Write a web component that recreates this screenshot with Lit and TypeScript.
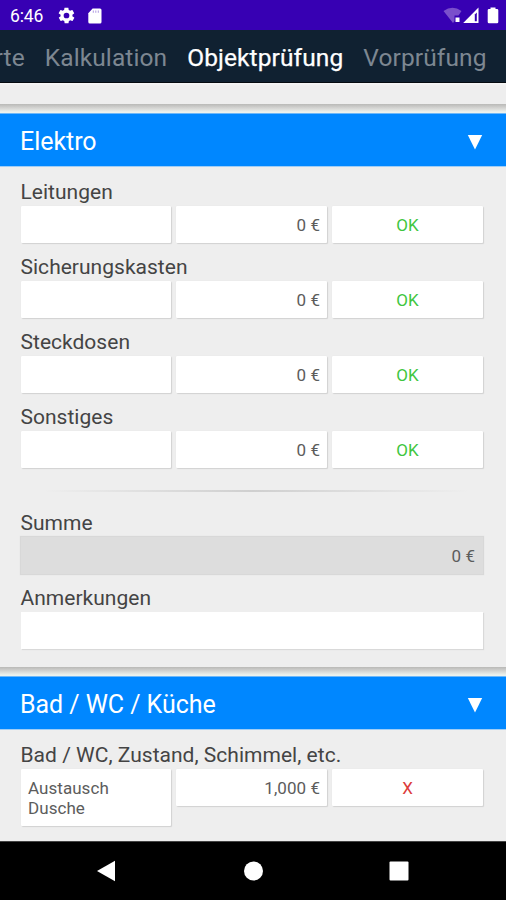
import { LitElement, html, css } from "lit";
import { customElement, property } from "lit/decorators.js";
import { classMap } from "lit/directives/class-map.js";

@customElement("status-bar")
class StatusBar extends LitElement {
  static styles = css`
    :host { display: flex; align-items: center; height: 30px; box-sizing: border-box; padding: 1px 7px 0 10px; background: #3700b3; color: #fff; }
    .time { font-size: 17.5px; line-height: 28px; width: 47px; letter-spacing: -0.1px; padding-top: 1px; }
    svg { display: block; flex: none; }
    .sd { margin-left: 12px; }
    .grow { flex: 1; }
    .battery { margin-left: 8px; }
    .signal { margin-left: 1px; }
  `;
  render() {
    return html`
      <span class="time">6:46</span>
      <svg width="19" height="19" viewBox="0 0 24 24" fill="#fff"><path d="M19.4 13c0-.3.1-.6.1-1s0-.7-.1-1l2.1-1.6c.2-.2.3-.4.1-.7l-2-3.4c-.1-.2-.4-.3-.6-.2l-2.5 1c-.5-.4-1.1-.7-1.7-1l-.4-2.6c0-.2-.2-.4-.5-.4h-4c-.2 0-.5.2-.5.4l-.4 2.6c-.6.3-1.2.6-1.7 1l-2.5-1c-.2-.1-.5 0-.6.2l-2 3.4c-.1.2-.1.5.1.7L4.6 11c0 .3-.1.6-.1 1s0 .7.1 1l-2.1 1.6c-.2.2-.3.4-.1.7l2 3.4c.1.2.4.3.6.2l2.5-1c.5.4 1.1.7 1.7 1l.4 2.6c0 .2.2.4.5.4h4c.2 0 .5-.2.5-.4l.4-2.6c.6-.3 1.2-.6 1.7-1l2.5 1c.2.1.5 0 .6-.2l2-3.4c.1-.2.1-.5-.1-.7zM12 15.6a3.6 3.6 0 1 1 0-7.2 3.6 3.6 0 0 1 0 7.2z"/></svg>
      <svg class="sd" width="14" height="16" viewBox="0 0 14 16"><path fill="#fff" d="M4.6 .5H12Q13.5 .5 13.5 2V14Q13.500 15.500 12 15.500H1.800Q.3 15.500 .3 14V5.200Z"/><path stroke="#3700b3" stroke-opacity=".4" stroke-width="1" d="M5.300 2.500V4.800M7.800 2.500V4.800M10.300 2.500V4.800"/></svg>
      <span class="grow"></span>
      <svg width="19" height="17" viewBox="0 0 19 17"><path fill="#7a4fcb" d="M.5 4Q9.500 -2.500 18.500 4L15.500 8.500H11.500V14L10 16Z"/><rect x="12.500" y="10.500" width="4" height="4.500" fill="#fff"/></svg>
      <svg class="signal" width="16" height="17" viewBox="0 0 16 17"><path fill="#fff" d="M.2 16L15.500 .5V16Z"/><path fill="#3700b3" d="M11.800 7.500L13.800 5.500V14.200H11.800Z"/></svg>
      <svg class="battery" width="12" height="17" viewBox="0 0 12 17"><path fill="#fff" d="M3.500 .5H8.500V2H10Q11.300 2 11.300 3.300V15Q11.300 16.300 10 16.300H2Q.7 16.300 .7 15V3.300Q.7 2 2 2H3.500Z"/></svg>
    `;
  }
}

@customElement("tab-strip")
class TabStrip extends LitElement {
  static styles = css`
    :host { display: flex; justify-content: flex-end; gap: 20px; height: 53px; box-sizing: border-box; padding-right: 19.500px; overflow: hidden; background: #102131; border-bottom: 1px solid #060b10; white-space: nowrap; }
    .tab { font-size: 24.5px; line-height: 56px; color: #7d8791; letter-spacing: 0.1px; }
    .active { color: #fff; -webkit-text-stroke: 0.25px #fff; }
  `;
  render() {
    return ["Objektkarte", "Kalkulation", "Objektprüfung", "Vorprüfung"].map(
      (t) => html`<span class=${classMap({ tab: true, active: t === "Objektprüfung" })}>${t}</span>`
    );
  }
}

interface Cost { label: string; note: string; cost: string; ok: boolean; }

@customElement("cost-row")
class CostRow extends LitElement {
  @property({ attribute: false }) item!: Cost;
  static styles = css`
    :host { display: block; }
    .label { margin-left: -0.5px; font-size: 21px; line-height: 24px; height: 26px; color: #444; letter-spacing: 0.02px; white-space: nowrap; }
    .fields { display: grid; grid-template-columns: 150px 151px 151px; gap: 5px; align-items: start; }
    .field { min-height: 37px; box-sizing: border-box; padding: 9px 7px 8px; background: #fff; box-shadow: 1px 1px 1px #d2d2d2, 0 0 1px #ddd; border-radius: 1px; font-size: 17px; line-height: 20px; color: #5c5c5c; letter-spacing: 0.05px; }
    .cost { text-align: right; }
    .state { text-align: center; color: #3fc63f; }
    .bad { color: #dc3a3a; }
  `;
  render() {
    const { label, note, cost, ok } = this.item;
    return html`
      <div class="label">${label}</div>
      <div class="fields">
        <div class="field">${note}</div>
        <div class="field cost">${cost}</div>
        <div class=${classMap({ field: true, state: true, bad: !ok })}>${ok ? "OK" : "X"}</div>
      </div>
    `;
  }
}

@customElement("section-head")
class SectionHead extends LitElement {
  @property() name = "";
  static styles = css`
    :host { display: flex; align-items: center; justify-content: space-between; height: 54px; box-sizing: border-box; padding: 3px 23px 0 20px; background: #0087ff; color: #fff; font-size: 25px; letter-spacing: -0.05px; border-top: 1px solid #6fb8f8; border-bottom: 1px solid #9fcdf6; }
    svg { display: block; margin-top: 1px; }
  `;
  render() {
    return html`<span>${this.name}</span><svg width="16" height="16" viewBox="0 0 16 16"><path fill="#fff" d="M.8 1H15.200L8 15.500Z"/></svg>`;
  }
}

@customElement("nav-bar")
class NavBar extends LitElement {
  static styles = css`
    :host { display: flex; align-items: center; height: 59px; box-sizing: border-box; background: #000; border-top: 1px solid #444; padding-left: 96px; }
    svg { display: block; }
    .home { margin-left: 128px; }
    .recent { margin-left: 125px; }
  `;
  render() {
    return html`
      <svg width="20" height="22" viewBox="0 0 20 22"><path fill="#fff" d="M1 11L19 .8V21.200Z"/></svg>
      <svg class="home" width="20" height="20" viewBox="0 0 20 20"><circle cx="9.500" cy="10" r="9.500" fill="#fff"/></svg>
      <svg class="recent" width="20" height="20" viewBox="0 0 20 20"><rect x=".5" y=".5" width="19" height="19" rx="1" fill="#fff"/></svg>
    `;
  }
}

const ELEKTRO: Cost[] = ["Leitungen", "Sicherungskasten", "Steckdosen", "Sonstiges"].map(
  (label) => ({ label, note: "", cost: "0 €", ok: true })
);
const BATH: Cost = { label: "Bad / WC, Zustand, Schimmel, etc.", note: "Austausch Dusche", cost: "1,000 €", ok: false };

@customElement("app-root")
class AppRoot extends LitElement {
  static styles = css`
    :host { display: flex; flex-direction: column; height: 900px; overflow: hidden; background: #eee; font-family: Roboto, "Liberation Sans", sans-serif; }
    status-bar, tab-strip, section-head, nav-bar { flex: none; }
    .tail { height: 21px; flex: none; background: linear-gradient(#f6f6f6, #eee 3px); }
    .gap { height: 9px; flex: none; background: linear-gradient(#b9b9b7, #d4d4d2 4px, #edf2ed 8px); }
    .card { flex: none; box-sizing: border-box; height: 500px; padding: 13px 23px 0 21px; }
    cost-row { height: 75px; }
    .rule { height: 2px; margin: 10px 0 19px; background: linear-gradient(90deg, transparent 5%, #cfcfcf 50%, transparent 97%); }
    .label { margin-left: -0.5px; font-size: 21px; line-height: 24px; height: 26px; color: #444; letter-spacing: 0.02px; }
    .total, .notes { box-sizing: border-box; height: 37px; margin-bottom: 12px; }
    .total { padding: 9px 8px; background: #ddd; box-shadow: 0 0 1px 1px #d8d8d8; text-align: right; font-size: 17px; line-height: 20px; color: #5c5c5c; letter-spacing: 0.05px; }
    .notes { background: #fff; box-shadow: 1px 1px 1px #d9d9d9; }
    .last { flex: 1; min-height: 0; height: auto; }
  `;
  render() {
    return html`
      <status-bar></status-bar>
      <tab-strip></tab-strip>
      <div class="tail"></div>
      <div class="gap"></div>
      <section-head name="Elektro"></section-head>
      <div class="card">
        ${ELEKTRO.map((item) => html`<cost-row .item=${item}></cost-row>`)}
        <div class="rule"></div>
        <div class="label">Summe</div>
        <div class="total">0 €</div>
        <div class="label">Anmerkungen</div>
        <div class="notes"></div>
      </div>
      <div class="gap"></div>
      <section-head name="Bad / WC / Küche"></section-head>
      <div class="card last"><cost-row .item=${BATH}></cost-row></div>
      <nav-bar></nav-bar>
    `;
  }
}
